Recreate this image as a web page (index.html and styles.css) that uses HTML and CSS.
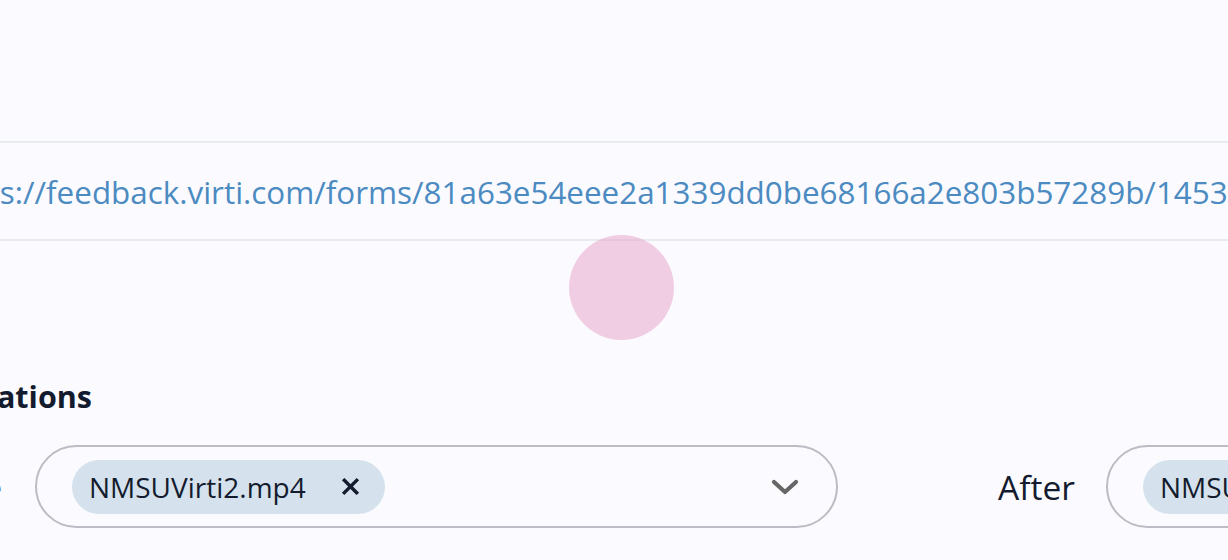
FILE: index.html
```html
<!DOCTYPE html>
<html lang="en">
<head>
<meta charset="utf-8">
<title>Feedback form</title>
<link rel="stylesheet" href="styles.css">
</head>
<body>
<div class="page">
  <div class="url-bar">
    <span class="url">https://feedback.virti.com/forms/81a63e54eee2a1339dd0be68166a2e803b57289b/1453</span>
  </div>
  <div class="heading-row">
    <h2 class="heading">Simulations</h2>
  </div>
  <div class="selects-row">
    <div class="field">
      <span class="field-label field-label--before">Before</span>
      <div class="select">
        <span class="chip">
          <span class="chip-text">NMSUVirti2.mp4</span>
          <svg class="chip-x" viewBox="0 0 20 20" width="19" height="19"><path d="M3.5 3.5 L16.5 16.5 M16.5 3.5 L3.5 16.5" stroke="#141b2e" stroke-width="3.6" stroke-linecap="square" fill="none"/></svg>
        </span>
        <svg class="chevron" viewBox="0 0 28 16" width="28" height="16"><path d="M3 3 L14 13 L25 3" stroke="#666666" stroke-width="4.2" stroke-linecap="round" stroke-linejoin="round" fill="none"/></svg>
      </div>
    </div>
    <div class="field">
      <span class="field-label">After</span>
      <div class="select">
        <span class="chip">
          <span class="chip-text">NMSUVirti2.mp4</span>
          <svg class="chip-x" viewBox="0 0 20 20" width="19" height="19"><path d="M3.5 3.5 L16.5 16.5 M16.5 3.5 L3.5 16.5" stroke="#141b2e" stroke-width="3.6" stroke-linecap="square" fill="none"/></svg>
        </span>
        <svg class="chevron" viewBox="0 0 28 16" width="28" height="16"><path d="M3 3 L14 13 L25 3" stroke="#666666" stroke-width="4.2" stroke-linecap="round" stroke-linejoin="round" fill="none"/></svg>
      </div>
    </div>
  </div>
</div>
<div class="cursor-dot"></div>
</body>
</html>
```
FILE: styles.css
```css
html, body {
  margin: 0;
  padding: 0;
}
body {
  background: #fafaff;
  width: 1228px;
  height: 560px;
  overflow: hidden;
  position: relative;
  font-family: "Open Sans", "Noto Sans", sans-serif;
  color: #141b2e;
}
.page {
  padding-top: 141px;
}
.url-bar {
  border-top: 2px solid #e8ebef;
  border-bottom: 2px solid #e8ebef;
  height: 96px;
  display: flex;
  align-items: center;
  white-space: nowrap;
  overflow: hidden;
}
.url {
  font-size: 31.4px;
  line-height: 40px;
  color: #4b8bc1;
  margin-left: -61px;
  padding-top: 2px;
}
.heading-row {
  width: 92px;
  display: flex;
  justify-content: flex-end;
  white-space: nowrap;
  margin-top: 135px;
}
.heading {
  margin: 0;
  font-size: 30.5px;
  line-height: 40px;
  font-weight: 700;
  color: #141b2e;
}
.selects-row {
  display: flex;
  align-items: center;
  gap: 160px;
  margin-top: 29px;
  margin-left: -98px;
  white-space: nowrap;
}
.field {
  display: flex;
  align-items: center;
  gap: 33px;
  flex: none;
}
.field + .field {
  gap: 31px;
}
.field-label {
  font-size: 33.5px;
  line-height: 40px;
  color: #141b2e;
}
.field-label--before {
  width: 100px;
  text-align: right;
  overflow: visible;
  direction: rtl;
}
.select {
  box-sizing: border-box;
  width: 803px;
  height: 83px;
  border: 2px solid #bdbcc4;
  border-radius: 42px;
  display: flex;
  align-items: center;
  justify-content: space-between;
  padding: 0 37px 0 35px;
  flex: none;
}
.chip {
  display: flex;
  align-items: center;
  gap: 35px;
  height: 54px;
  padding: 0 25px 0 17px;
  background: #d5e2ed;
  border-radius: 27px;
}
.chip-text {
  font-size: 28px;
  line-height: 40px;
  color: #141b2e;
}
.chip-x {
  display: block;
}
.chevron {
  display: block;
}
.cursor-dot {
  position: absolute;
  left: 569px;
  top: 235px;
  width: 105px;
  height: 105px;
  border-radius: 50%;
  background: rgba(230, 150, 196, 0.45);
}
```
